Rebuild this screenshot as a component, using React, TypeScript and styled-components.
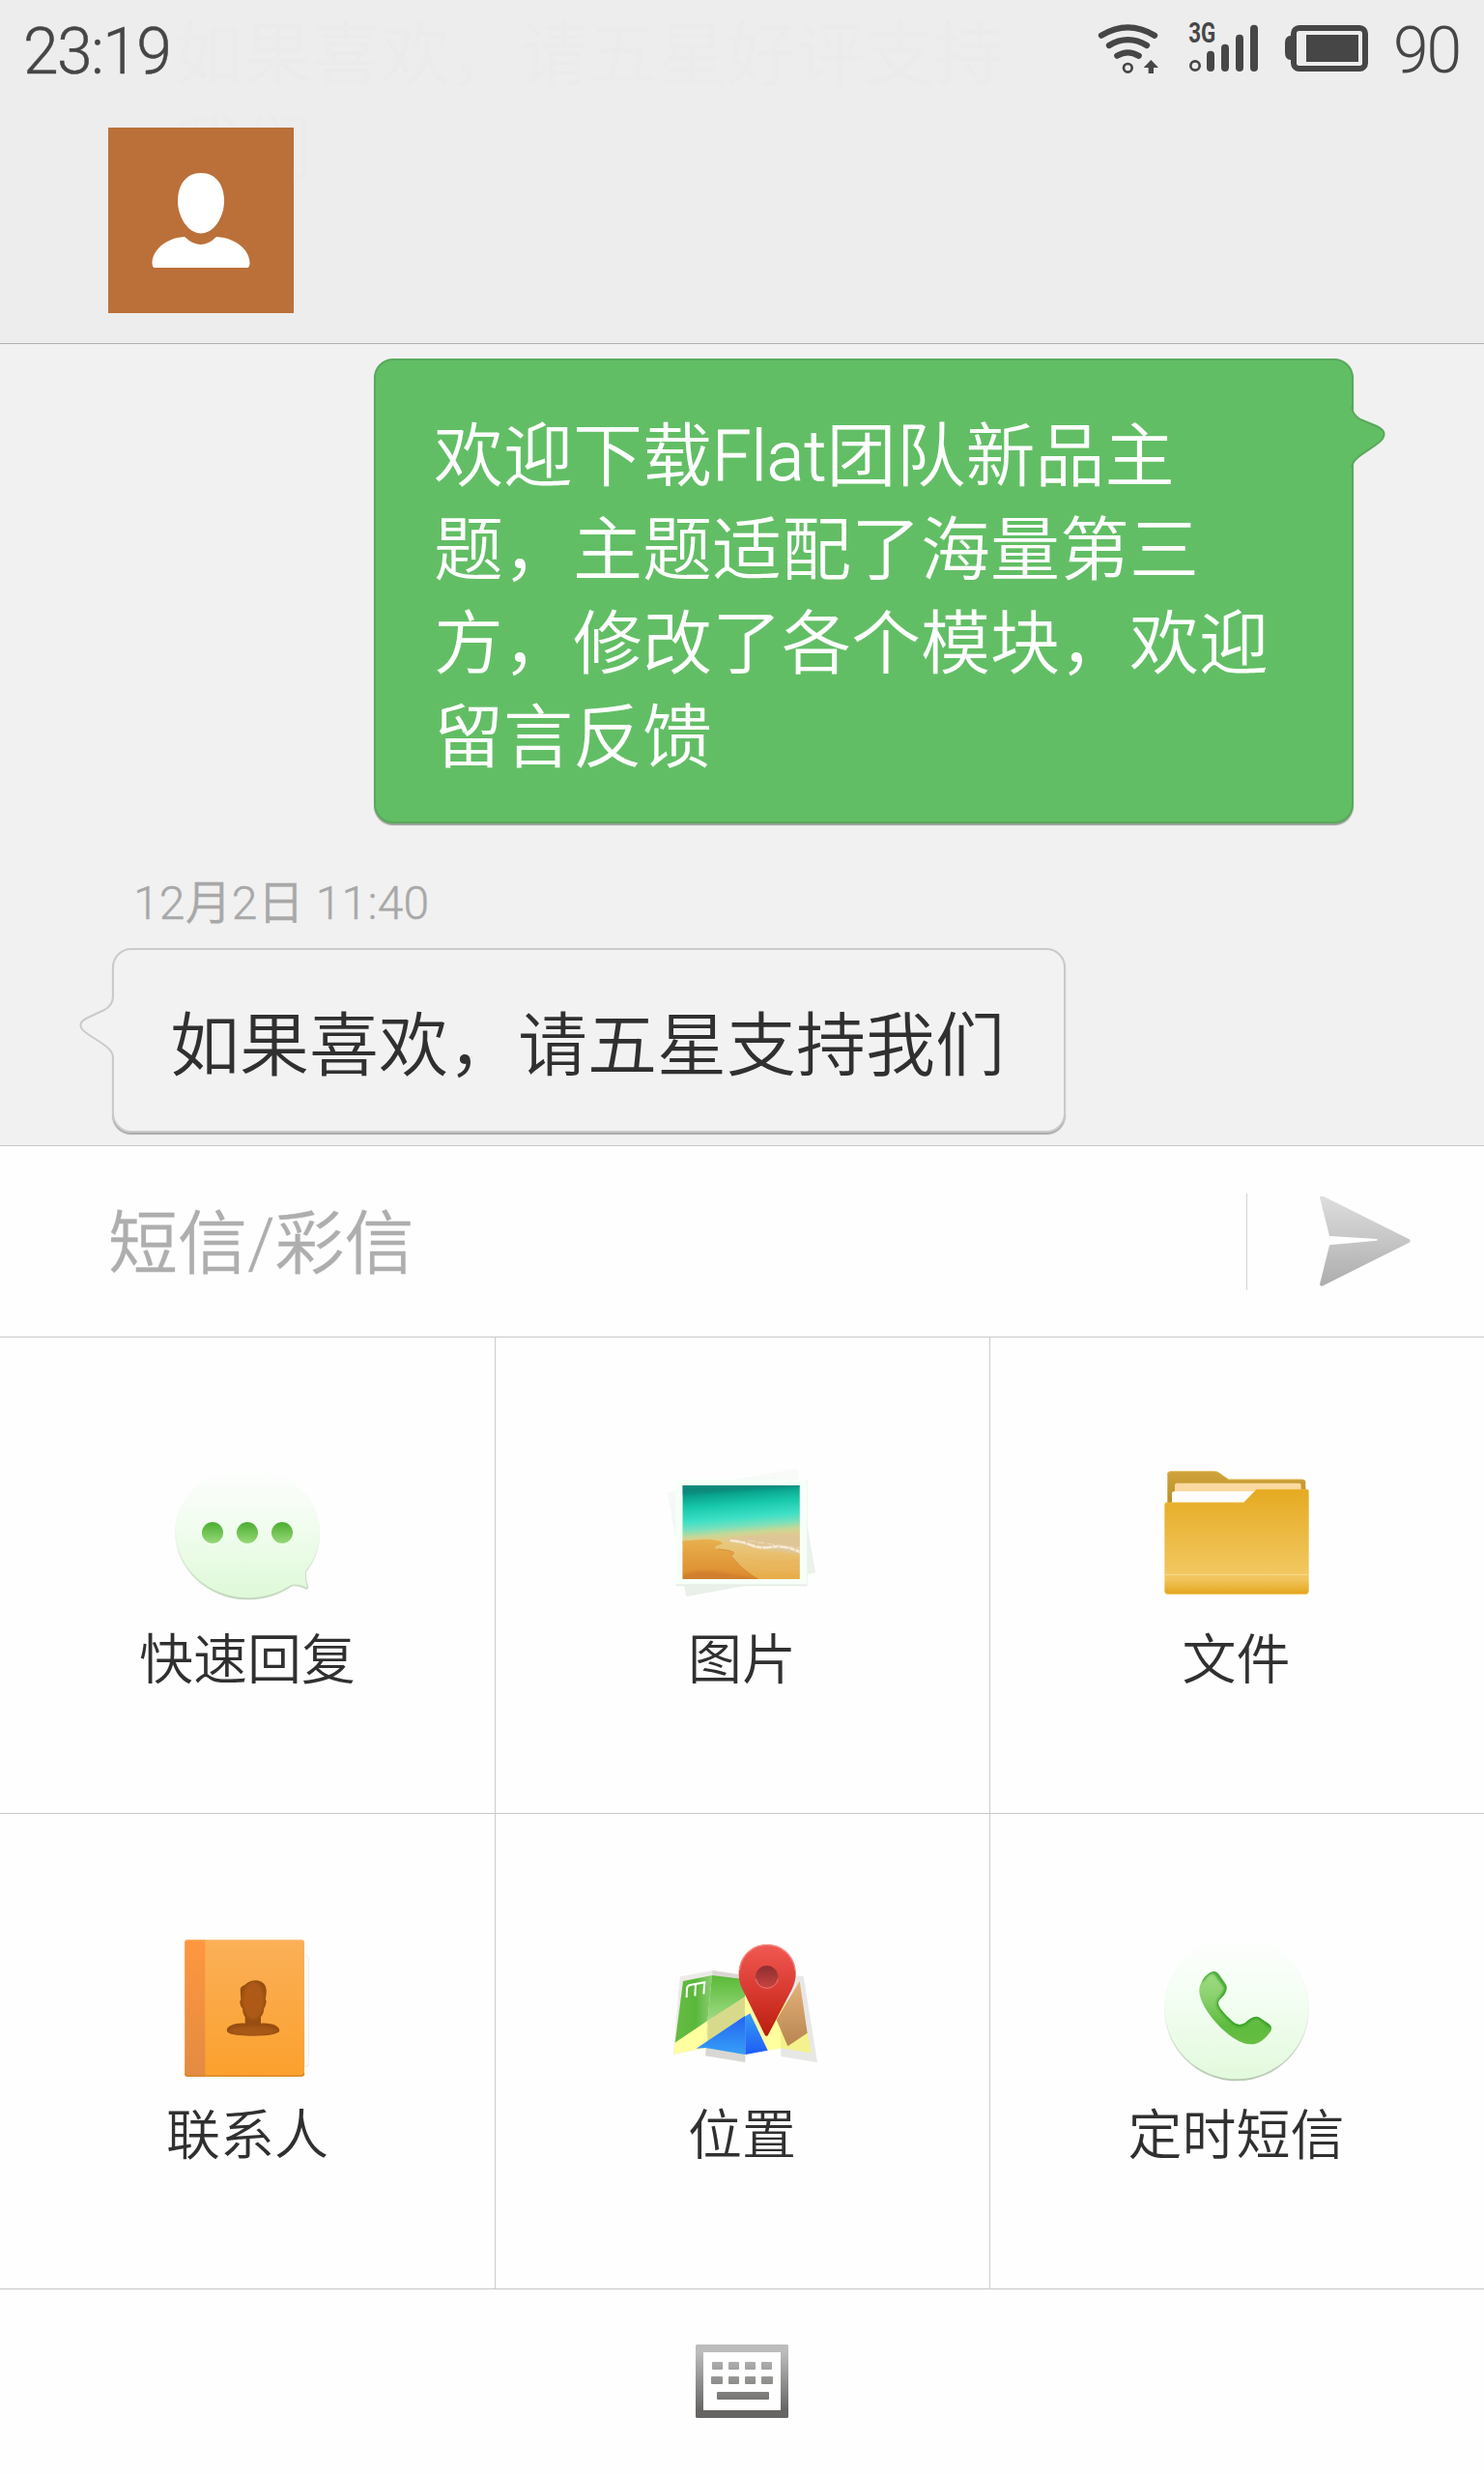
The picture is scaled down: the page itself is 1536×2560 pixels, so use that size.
import React from 'react';
import styled, { createGlobalStyle } from 'styled-components';

const FONT = 'Roboto, "Noto Sans CJK SC", sans-serif';

const GlobalStyle = createGlobalStyle`
  * { box-sizing: border-box; }
  html, body { margin: 0; padding: 0; }
  body {
    font-family: ${FONT};
    font-weight: 350;
    color: #303030;
    background: #f1f1f1;
  }
  svg { display: block; flex: none; }
`;

const Screen = styled.div`
  width: 1536px;
  height: 2560px;
  display: flex;
  flex-direction: column;
  overflow: hidden;
  background: #f1f1f1;
`;

const Header = styled.header`
  position: relative;
  height: 356px;
  flex: none;
  background: #ededed;
  border-bottom: 1px solid #b0b0b0;
`;

const StatusBar = styled.div`
  position: relative;
  height: 104px;
  padding: 0 24px 0 24px;
  display: flex;
  align-items: center;
  color: #464646;
`;

const Clock = styled.span`
  flex: 1;
  padding-top: 3px;
  font-size: 66px;
  line-height: 104px;
  letter-spacing: -1.6px;
  -webkit-text-stroke: 0.5px #464646;
`;

const StatusIcons = styled.div`
  display: flex;
  align-items: center;
`;

const BatteryLevel = styled.span`
  width: 70px;
  margin-left: 25px;
  padding-top: 1px;
  font-size: 66px;
  line-height: 104px;
  letter-spacing: -2px;
  white-space: nowrap;
`;

const FadedMessage = styled.div`
  position: absolute;
  left: 180px;
  top: 9px;
  width: 870px;
  font-size: 71.5px;
  line-height: 97px;
  color: #ebebeb;
`;

const Avatar = styled.div`
  position: relative;
  width: 192px;
  height: 192px;
  margin: 28px 0 0 112px;
  background: #bb7039;
`;

const Messages = styled.main`
  height: 829px;
  flex: none;
  padding: 15px 135px 0 116px;
  display: flex;
  flex-direction: column;
  align-items: flex-start;
`;

const Bubble = styled.div<{ $sent?: boolean }>`
  position: relative;
  width: ${(p) => (p.$sent ? 1014 : 987)}px;
  align-self: ${(p) => (p.$sent ? 'flex-end' : 'flex-start')};
  padding: 51px 60px ${(p) => (p.$sent ? 38 : 39)}px ${(p) => (p.$sent ? 60 : 58)}px;
  border: 2px solid ${(p) => (p.$sent ? '#58a95c' : '#c9cacb')};
  border-radius: 20px;
  background: ${(p) => (p.$sent ? '#62be65' : '#f2f2f2')};
  box-shadow: 0 2px 1px ${(p) => (p.$sent ? 'rgba(60, 80, 60, 0.5)' : 'rgba(0, 0, 0, 0.3)')};
  color: ${(p) => (p.$sent ? '#fff' : '#303030')};
  font-size: 72px;
  line-height: 97px;
`;

const Latin = styled.span`
  -webkit-text-stroke: 0.9px currentColor;
`;

const Tail = styled.svg<{ $side: 'left' | 'right' }>`
  position: absolute;
  top: 47px;
  ${(p) => (p.$side === 'right' ? 'right: -36px;' : 'left: -36px;')}
`;

const Timestamp = styled.time`
  margin: 53px 0 16px 22px;
  font-size: 48px;
  line-height: 60px;
  letter-spacing: 0.2px;
  color: #a8a8a8;
  -webkit-text-stroke: 0.4px #a8a8a8;
`;

const Composer = styled.div`
  height: 199px;
  flex: none;
  padding: 0 76px 0 112px;
  display: flex;
  align-items: center;
  background: #fefefe;
  border-top: 1px solid #c8c8c8;
  border-bottom: 1px solid #c8c8c8;
`;

const Placeholder = styled.div`
  flex: 1;
  padding-top: 5px;
  font-size: 72px;
  line-height: 97px;
  color: #aeaeae;
  -webkit-text-stroke: 0.3px #aeaeae;
`;

const SendButton = styled.div`
  height: 100px;
  padding-left: 75px;
  display: flex;
  align-items: center;
  border-left: 1px solid #d4d4d4;
`;

const Panel = styled.div`
  height: 985px;
  flex: none;
  display: grid;
  grid-template-columns: 513px 512px 511px;
  grid-template-rows: 493px 492px;
  background: #fefefe;
`;

const Cell = styled.div`
  padding-top: 120px;
  display: flex;
  flex-direction: column;
  align-items: center;
  gap: 18px;
  border-bottom: 1px solid #c8c8c8;
  border-right: 1px solid #cdcdcd;
  &:nth-child(3n) { border-right: none; }
  &:nth-child(3n + 2) { padding-right: 1px; }
  &:nth-child(3n) { padding-right: 2px; }
  &:nth-child(n + 4) { padding-top: 119px; }
`;

const Label = styled.span`
  font-size: 56px;
  line-height: 72px;
`;

const Footer = styled.footer`
  flex: 1;
  padding-top: 57px;
  display: flex;
  justify-content: center;
  background: #fefefe;
`;

const stops = (id: string, colours: [number, string][], horizontal = false) => (
  <linearGradient id={id} x1="0" y1="0" x2={horizontal ? 1 : 0} y2={horizontal ? 0 : 1}>
    {colours.map(([at, c]) => (
      <stop key={at} offset={at} stopColor={c} />
    ))}
  </linearGradient>
);

const Indicators = () => (
  <svg width="282" height="104" viewBox="105 0 846 312" fill="#464646">
    <g fill="none" stroke="#464646" strokeWidth="19" strokeLinecap="round">
      <path d="M120 110Q202 60 285 110" />
      <path d="M144 141Q202 106 261 141" />
      <path d="M169 173Q202 153 236 173" />
      <circle cx="202" cy="211" r="13" strokeWidth="8" />
      <circle cx="411" cy="204" r="14" strokeWidth="8" />
    </g>
    <path d="M274 186L297 210H282V228H266V210H251Z" />
    <text x="391" y="131" fontSize="91" fontWeight="700" textLength="84" lengthAdjust="spacingAndGlyphs">3G</text>
    <rect x="447" y="158" width="24" height="64" rx="12" />
    <rect x="492" y="137" width="24" height="85" rx="12" />
    <rect x="537" y="107" width="24" height="115" rx="12" />
    <rect x="582" y="77" width="24" height="145" rx="12" />
    <path d="M710 110H708Q690 112 690 132V164Q690 184 708 186H710Z" />
    <rect x="717" y="87" width="222" height="126" rx="17" fill="none" stroke="#464646" strokeWidth="18" />
    <rect x="756" y="108" width="162" height="84" />
  </svg>
);

const PersonIcon = () => (
  <svg width="192" height="192" viewBox="0 0 192 192" fill="#fff">
    <path d="M96 47C112 47 120 60 120 76C120 93 109 109.500 96 109.500C83 109.500 72 93 72 76C72 60 80 47 96 47Z" />
    <path d="M79 113Q96 129 112 113C132 114 147 127 146.500 141Q146 145 144 145H48Q46 145 45.500 141C45 127 60 114 79 113Z" />
  </svg>
);

const SentTail = () => (
  <Tail $side="right" width="38" height="66" viewBox="0 0 38 66">
    <path d="M0 1H2Q3 9 11 14L28 21Q39 26 34 34C28 43 2 52 2 64H0Z" fill="#62be65" />
    <path d="M2 1Q3 9 11 14L28 21Q39 26 34 34C28 43 2 52 2 64" fill="none" stroke="#58a95c" strokeWidth="2" />
  </Tail>
);

const ReceivedTail = () => (
  <Tail $side="left" width="38" height="66" viewBox="0 0 38 66">
    <path d="M38 1H35Q35 10 26 15L9 23Q-2 28 3 35C9 43 35 52 35 64H38Z" fill="#f2f2f2" />
    <path d="M35 1Q35 10 26 15L9 23Q-2 28 3 35C9 43 35 52 35 64" fill="none" stroke="#c9cacb" strokeWidth="2" />
  </Tail>
);

const SendIcon = () => (
  <svg width="94" height="94" viewBox="501 175 280 280">
    <defs>{stops('send', [[0, '#dedede'], [1, '#adadad']])}</defs>
    <path
      d="M501 178Q502 171 509 173L777 307Q783 312 777 317L509 451Q502 453 501 446L531 325L678 311V306L531 297Z"
      fill="url(#send)"
    />
  </svg>
);

const QuickReplyIcon = () => (
  <svg width="180" height="160" viewBox="18 12 540 480">
    <defs>
      {stops('qrBody', [[0, '#fefefe'], [0.45, '#f1fdef'], [1, '#def9d8']])}
      {stops('qrEdge', [[0, '#fefefe'], [0.5, '#eef7ec'], [1, '#c3d5be']])}
      {stops('qrDot', [[0, '#4bad30'], [1, '#96d978']])}
    </defs>
    <path
      d="M288 58C412 58 514 145 514 258C514 308 496 350 471 380Q470 405 478 428Q478 434 470 434Q442 421 425 425C384 453 339 466 288 466C166 466 63 370 63 258C63 145 164 58 288 58Z"
      fill="url(#qrEdge)"
    />
    <path
      d="M288 58C410 58 512 145 512 256C512 306 494 346 467 378Q466 402 473 428Q441 414 423 420C382 447 339 460 288 460C169 460 66 366 66 256C66 145 166 58 288 58Z"
      fill="url(#qrBody)"
    />
    {[180, 288, 396].map((x) => (
      <circle key={x} cx={x} cy="258" r="33" fill="url(#qrDot)" />
    ))}
  </svg>
);

const PictureIcon = () => (
  <svg width="180" height="160" viewBox="25 12 540 480">
    <defs>
      {stops('sea', [[0, '#08897a'], [0.22, '#0ba68f'], [0.4, '#18c9ab'], [0.64, '#3fe0c6'], [0.78, '#7be0bb'], [0.9, '#c9d795'], [1, '#dfcd8b']])}
      {stops('sand', [[0, '#e8b04f'], [1, '#dd8a2c']])}
      {stops('wet', [[0, '#e8cb85'], [1, '#e8a840']])}
      {stops('paper', [[0, '#f8fbf8'], [1, '#edf4ee']])}
      <clipPath id="photo"><rect x="111" y="111" width="363" height="291" /></clipPath>
      <filter id="soft" x="-10%" y="-10%" width="120%" height="120%"><feGaussianBlur stdDeviation="5" /></filter>
    </defs>
    <path d="M63 132L466 58L523 382L122 456Z" fill="url(#paper)" />
    <path d="M497 235L523 382L497 388Z" fill="#ebf2ec" />
    <path d="M115 424H300L122 456Z" fill="#e9f0ea" />
    <rect x="89" y="95" width="409" height="329" rx="3" fill="#e6eee6" />
    <rect x="88" y="92" width="409" height="326" fill="#f7fff9" />
    <g clipPath="url(#photo)">
      <rect x="100" y="100" width="390" height="310" fill="#dfcd8b" />
      <g transform="translate(0 23) skewY(-5)">
        <rect x="100" y="98" width="390" height="182" fill="url(#sea)" />
      </g>
      <path d="M100 96H490V112L100 140Z" fill="#08897a" filter="url(#soft)" />
      <path d="M90 282L210 278L290 288L490 326V415H90Z" fill="url(#wet)" filter="url(#soft)" />
      <path d="M230 276Q340 260 490 262V325L370 310Z" fill="#dfc697" filter="url(#soft)" />
      <path d="M105 284L185 278Q235 282 235 292Q195 304 222 309Q290 315 260 329C277 345 290 370 345 402H105Z" fill="url(#sand)" />
      <path d="M220 309Q290 315 260 329C277 345 290 370 345 402" fill="none" stroke="#cb8438" strokeWidth="2" />
      <path d="M258 282Q300 286 325 297T390 302T480 320" fill="none" stroke="#f7ead5" strokeWidth="8" strokeDasharray="30 2 17 3" />
      <path d="M315 282Q380 294 475 306" fill="none" stroke="#efdbc0" strokeWidth="3" strokeDasharray="22 8" />
      <path d="M310 340Q390 355 472 344M330 365Q400 380 470 368" fill="none" stroke="#eab55f" strokeWidth="5" />
      <path d="M110 390Q160 368 245 383T340 400V410H110Z" fill="#c9782d" opacity=".65" filter="url(#soft)" />
    </g>
  </svg>
);

const FolderIcon = () => (
  <svg width="180" height="160" viewBox="30 12 540 480">
    <defs>
      {stops('folder', [[0, '#e5aa20'], [0.8, '#f2c761'], [0.86, '#f1c55c'], [1, '#e3a51c']])}
      {stops('folderBack', [[0, '#cfa23b'], [1, '#b98d25']])}
    </defs>
    <path d="M85 180V77Q85 68 94 68H233Q240 68 246 73L275 93H505Q514 93 514 102V180Z" fill="url(#folderBack)" />
    <path d="M85 78Q85 68 94 68H233Q240 68 246 73L275 93H505" fill="none" stroke="#e0b653" strokeWidth="3" />
    <path d="M108 150V110Q108 104 114 104H494Q500 104 500 110V150Z" fill="#fbd9a0" />
    <path d="M99 170V136Q99 130 105 130H370V170Z" fill="#fff" />
    <path d="M76 172Q76 164 85 164H322L362 123H516Q524 123 524 131V438Q524 449 513 449H87Q76 449 76 438Z" fill="url(#folder)" />
    <path d="M77 388H523" stroke="#f8dc91" strokeWidth="3" />
    <path d="M80 446Q84 449 90 449H510Q518 449 521 445" fill="none" stroke="#f2d073" strokeWidth="3" />
    <path d="M77 165H322L362 124H520" fill="none" stroke="#edbd48" strokeWidth="2" />
  </svg>
);

const ContactsIcon = () => (
  <svg width="180" height="160" viewBox="18 18 540 480">
    <defs>
      {stops('cover', [[0, '#fbb058'], [1, '#fba02d']])}
      {stops('spine', [[0, '#ff973f'], [1, '#e38b42']])}
      <filter id="contactsBlur"><feGaussianBlur stdDeviation="4" /></filter>
      <clipPath id="headClip">
        <path d="M266 207C267 195 276 195 284 189C296 177 320 174 334 184C348 192 350 210 344 236Q349 240 345 253Q343 263 340 263Q339 281 330 291V311C365 308 388 320 388 333C387 345 348 350 306 350C260 350 224 345 224 333C224 319 251 308 281 311V291Q273 281 273 263Q268 262 266 251Q263 242 268 238Z" />
      </clipPath>
    </defs>
    <path d="M465 97Q480 99 480 112V438Q480 446 470 447L462 449Z" fill="#efefef" />
    <path d="M464 98Q477 99 477 112V435Q477 441 468 443Z" fill="#fcfcfc" />
    <rect x="94" y="52" width="371" height="424" rx="8" fill="url(#cover)" />
    <path d="M157 52V476H102Q94 476 94 468V60Q94 52 102 52Z" fill="url(#spine)" />
    <path d="M95 466Q96 474 104 474H455Q464 474 464 466" fill="none" stroke="#d78829" strokeWidth="4" />
    <path d="M98 54H461" stroke="#ffbd6a" strokeWidth="2" />
    <g clipPath="url(#headClip)">
      <rect x="220" y="170" width="172" height="184" fill="#974e10" />
      <ellipse cx="307" cy="240" rx="33" ry="58" fill="#ae5a13" filter="url(#contactsBlur)" />
      <ellipse cx="306" cy="335" rx="72" ry="15" fill="#a75915" filter="url(#contactsBlur)" />
    </g>
  </svg>
);

const MapIcon = () => (
  <svg width="180" height="160" viewBox="25 18 540 480">
    <defs>
      {stops('mapGreen1', [[0, '#69bd45'], [0.55, '#59b73a'], [1, '#8bce70']], true)}
      {stops('mapGreen2', [[0, '#58b936'], [1, '#a1dc84']])}
      {stops('mapBlue1', [[0, '#2563f0'], [1, '#35a0f8']])}
      {stops('mapBlue2', [[0, '#369cf6'], [1, '#1e5cf5']])}
      {stops('mapBrown', [[0, '#e5b27c'], [1, '#b7854f']])}
      {stops('pin', [[0, '#f15952'], [0.5, '#d93a31'], [1, '#bb1e0d']])}
      {stops('pinHole', [[0, '#8d2e30'], [1, '#c84440']])}
    </defs>
    <path d="M102 166L204 147L304 161L304 408L182 388L82 407Z" fill="#edebe8" />
    <path d="M204 147L310 163L305 432L181 412Z" fill="#d9d7d3" />
    <path d="M415 160L486 165L529 432L416 414Z" fill="#e7e7e5" />
    <path d="M112 180L202 162L188 304L87 372Z" fill="url(#mapGreen1)" />
    <path d="M202 162L304 174V229L188 304Z" fill="url(#mapGreen2)" />
    <path d="M87 371L188 303L182 387L83 406Z" fill="#ffff9f" />
    <path d="M188 303L304 229V288L153 391L182 385Z" fill="#d8da8b" />
    <path d="M188 303V367L153 391L182 387Z" fill="#ffff9f" />
    <path d="M153 389L304 288V408L182 387Z" fill="url(#mapBlue1)" />
    <path d="M304 222L415 190V389L375 395L320 280L304 290Z" fill="#ffff9f" />
    <path d="M304 290L320 280L375 395L305 408Z" fill="url(#mapBlue2)" />
    <path d="M415 220L498 341L510 403L415 388Z" fill="#f4f28d" />
    <path d="M474 180L498 341L437 382L402 300Z" fill="url(#mapBrown)" />
    <path d="M123 231L124 203Q125 194 134 192L179 184L176 220M151 190L149 226" fill="none" stroke="#fff" strokeWidth="6" />
    <path d="M373 66C423 66 462 106 462 158C462 178 454 198 446 213L376 347Q371 354 366 347L300 213C291 196 285 179 285 158C285 106 323 66 373 66Z" fill="url(#pin)" />
    <path d="M287 147C292 99 329 68 373 68S455 99 460 147" fill="none" stroke="#f58680" strokeWidth="4" />
    <circle cx="372" cy="167" r="35" fill="url(#pinHole)" />
    <path d="M338 173A35 35 0 0 0 407 173" fill="none" stroke="#f17a76" strokeWidth="3" />
  </svg>
);

const HANDSET =
  'M319 150Q328 149 336 160L356 189Q361 199 358 207C354 231 328 234 334 255C343 274 361 290 379 307Q396 322 416 310C433 294 447 286 461 293L490 313Q502 323 496 335C479 357 462 377 432 376C390 374 335 326 305 283C283 251 270 221 275 199C280 176 300 152 319 150Z';

const TimedIcon = () => (
  <svg width="180" height="160" viewBox="120 18 540 480">
    <defs>
      {stops('disc', [[0, '#fefefe'], [0.45, '#f3fef2'], [1, '#e2f9dc']])}
      {stops('discEdge', [[0, '#fefefe'], [0.5, '#eff5ee'], [1, '#b7c7b3']])}
      {stops('handset', [[0, '#9fdc83'], [0.35, '#8bd16e'], [0.75, '#5ebb3e'], [1, '#67be43']])}
      <clipPath id="handsetClip"><path d={HANDSET} /></clipPath>
      <filter id="handsetBlur" x="-20%" y="-20%" width="140%" height="140%"><feGaussianBlur stdDeviation="5" /></filter>
    </defs>
    <circle cx="390" cy="265" r="225" fill="url(#discEdge)" />
    <ellipse cx="390" cy="262" rx="223" ry="222" fill="url(#disc)" />
    <path d={HANDSET} fill="url(#handset)" />
    <g clipPath="url(#handsetClip)">
      <path
        d="M280 180Q300 148 322 150L358 199C354 231 328 234 334 255C343 274 361 290 379 307Q396 322 416 310C433 294 447 286 461 293L500 323"
        fill="none" stroke="#27981b" strokeWidth="9" filter="url(#handsetBlur)"
      />
    </g>
  </svg>
);

const KeyboardIcon = () => (
  <svg width="96" height="76" viewBox="0 0 96 76">
    <defs>
      <linearGradient id="keys" gradientUnits="userSpaceOnUse" x1="0" y1="0" x2="0" y2="76">
        <stop offset=".1" stopColor="#bcbcbc" />
        <stop offset=".9" stopColor="#666563" />
      </linearGradient>
    </defs>
    <g fill="url(#keys)">
      <path fillRule="evenodd" d="M1 0H95L96 1V75L95 76H1L0 75V1ZM8 8V68H88V8Z" />
      {[17, 34, 51, 68].map((x) => (
        <rect key={x} x={x} y="18" width="11" height="8" rx="1" />
      ))}
      {[16, 34, 51, 68].map((x) => (
        <rect key={x} x={x} y="33" width={x === 16 || x === 68 ? 12 : 11} height="8" rx="1" />
      ))}
      <rect x="22" y="49" width="54" height="8" rx="1" />
    </g>
  </svg>
);

const ACTIONS = [
  { label: '快速回复', Icon: QuickReplyIcon },
  { label: '图片', Icon: PictureIcon },
  { label: '文件', Icon: FolderIcon },
  { label: '联系人', Icon: ContactsIcon },
  { label: '位置', Icon: MapIcon },
  { label: '定时短信', Icon: TimedIcon },
];

export default function App() {
  return (
    <>
      <GlobalStyle />
      <Screen>
        <Header>
          <FadedMessage>如果喜欢，请五星好评支持我们</FadedMessage>
          <StatusBar>
            <Clock>23:19</Clock>
            <StatusIcons>
              <Indicators />
              <BatteryLevel>90</BatteryLevel>
            </StatusIcons>
          </StatusBar>
          <Avatar>
            <PersonIcon />
          </Avatar>
        </Header>
        <Messages>
          <Bubble $sent>
            欢迎下载<Latin>Flat</Latin>团队新品主
            <br />
            题，主题适配了海量第三
            <br />
            方，修改了各个模块，欢迎
            <br />
            留言反馈
            <SentTail />
          </Bubble>
          <Timestamp>12月2日 11:40</Timestamp>
          <Bubble>
            如果喜欢，请五星支持我们
            <ReceivedTail />
          </Bubble>
        </Messages>
        <Composer>
          <Placeholder>短信/彩信</Placeholder>
          <SendButton>
            <SendIcon />
          </SendButton>
        </Composer>
        <Panel>
          {ACTIONS.map(({ label, Icon }) => (
            <Cell key={label}>
              <Icon />
              <Label>{label}</Label>
            </Cell>
          ))}
        </Panel>
        <Footer>
          <KeyboardIcon />
        </Footer>
      </Screen>
    </>
  );
}
